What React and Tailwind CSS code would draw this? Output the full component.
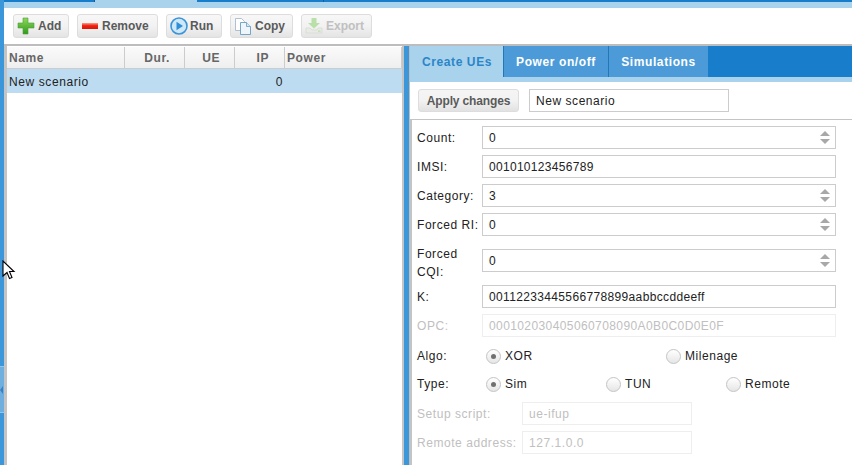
import React from "react";

const font = { fontFamily: '"Liberation Sans", Arial, sans-serif' };

function AddIcon() {
  return (
    <svg width="18" height="18" viewBox="0 0 18 18">
      <defs>
        <linearGradient id="g1" x1="0" y1="0" x2="0" y2="1">
          <stop offset="0" stopColor="#8fd85a" />
          <stop offset="1" stopColor="#2f9a1c" />
        </linearGradient>
      </defs>
      <path d="M6 1h5v5h6v5h-6v6H6v-6H1V6h5z" fill="url(#g1)" stroke="#4a9e35" strokeWidth="0.6" />
    </svg>
  );
}
function RemoveIcon() {
  return (
    <svg width="18" height="18" viewBox="0 0 18 18">
      <defs>
        <linearGradient id="g2" x1="0" y1="0" x2="0" y2="1">
          <stop offset="0" stopColor="#f8a090" />
          <stop offset="0.45" stopColor="#f02010" />
          <stop offset="1" stopColor="#d81808" />
        </linearGradient>
      </defs>
      <rect x="1" y="6" width="16" height="6" fill="url(#g2)" />
    </svg>
  );
}
function RunIcon() {
  return (
    <svg width="18" height="18" viewBox="0 0 18 18">
      <circle cx="9" cy="9" r="8" fill="#cfe8f8" stroke="#3c94d8" strokeWidth="1.6" />
      <path d="M6.5 4.8L13 9l-6.5 4.2z" fill="#2f8ed8" />
    </svg>
  );
}
function CopyIcon() {
  return (
    <svg width="18" height="18" viewBox="0 0 18 18">
      <path d="M1.5 1.5h6l3 3v9h-9z" fill="#fff" stroke="#9db4c8" strokeWidth="0.8" />
      <path d="M6.5 5.5h6l4 4v8h-10z" fill="#eef6fb" stroke="#6a9cc0" strokeWidth="0.9" />
      <path d="M12.5 5.5v4h4" fill="#d5e8f4" stroke="#6a9cc0" strokeWidth="0.8" />
    </svg>
  );
}
function ExportIcon() {
  return (
    <svg width="18" height="18" viewBox="0 0 18 18">
      <path d="M6.5 1h5v5h3.5L9 11.5 3 6h3.5z" fill="#b9e0a8" />
      <path d="M1 11h4l2 2h5l1-2h4v5H1z" fill="#e8ece4" stroke="#d0d6cc" strokeWidth="0.6" />
      <rect x="13" y="13.5" width="2.5" height="1.2" fill="#b9e0a8" />
    </svg>
  );
}

function Btn({ icon, label, w, disabled, gap = "gap-[3px]", pl = "pl-[3px]" }) {
  return (
    <div
      className={`h-[24px] flex items-center ${gap} ${pl} rounded-[3px] border border-[#dddddd] bg-gradient-to-b from-[#f7f7f7] via-[#f2f2f2] to-[#e4e4e4] text-[12px] font-bold tracking-[0px] ${disabled ? "text-[#c0c0c0]" : "text-[#5a5a5a]"} ${w}`}
    >
      {icon}
      <span>{label}</span>
    </div>
  );
}

function HeadCell({ label, w, right, pr = "" }) {
  return (
    <div
      className={`h-full flex items-center border-r border-[#cccccc] text-[12px] font-bold tracking-[0.6px] text-[#666666] ${w} ${right ? "justify-end" : "pl-[2px]"} ${pr}`}
    >
      {label}
    </div>
  );
}

function Spinner() {
  return (
    <div className="flex flex-col items-center gap-[3px] mr-[4px]">
      <span className="w-0 h-0 border-x-[5px] border-x-transparent border-b-[5px] border-b-[#a8a8a8]" />
      <span className="w-0 h-0 border-x-[5px] border-x-transparent border-t-[5px] border-t-[#a8a8a8]" />
    </div>
  );
}

function Field({ value, spin, disabled, w = "w-[354px]", track = "tracking-[0.55px]" }) {
  return (
    <div
      className={`h-[23px] flex items-center justify-between pl-[6px] pr-[1px] border ${disabled ? "border-[#eeeeee] text-[#c0c0c0]" : "border-[#cccccc] text-[#222222]"} bg-white ${track} ${w}`}
    >
      <span>{value}</span>
      {spin && <Spinner />}
    </div>
  );
}

function Row({ label, value, spin, disabled, track }) {
  return (
    <div className="flex items-center h-[23px] mb-[6px]">
      <div className={`w-[65px] tracking-[0.55px] ${disabled ? "text-[#c0c0c0]" : "text-[#222222]"}`}>{label}</div>
      <Field value={value} spin={spin} disabled={disabled} track={track} />
    </div>
  );
}

function Radio({ label, checked, w }) {
  return (
    <div className={`flex items-center gap-[4px] tracking-[0.55px] text-[#222222] ${w}`}>
      <span className="w-[15px] h-[15px] rounded-full border border-[#c4c4c4] bg-gradient-to-b from-white to-[#e6e6e6] flex items-center justify-center">
        {checked && <span className="w-[5px] h-[5px] rounded-full bg-[#707070]" />}
      </span>
      <span>{label}</span>
    </div>
  );
}

export default function App() {
  return (
    <div style={font} className="relative w-[852px] h-[465px] overflow-hidden bg-white flex text-[12px]">
      {/* left collapsed strip */}
      <div className="w-[4px] shrink-0 h-full bg-[#3c96da] flex flex-col">
        <div className="h-[366px]" />
        <div className="h-[47px] bg-[#6fafe0] border-y border-[#93c4ea] flex items-center">
          <span className="w-0 h-0 border-y-[4px] border-y-transparent border-r-[3px] border-r-[#3a80c0]" />
        </div>
      </div>

      <div className="flex-1 min-w-0 flex flex-col">
        {/* top tabs remainder */}
        <div className="h-[2px] flex shrink-0">
          <div className="w-[91px] bg-[#187dca] border-r border-[#0f5f9e]" />
          <div className="w-[102px] bg-[#a9d2ec]" />
          <div className="w-[127px] bg-[#187dca] border-r border-[#0f5f9e]" />
          <div className="flex-1 bg-[#187dca]" />
        </div>
        <div className="h-[6px] shrink-0 bg-[#a9d2ec]" />

        {/* toolbar */}
        <div className="h-[36px] shrink-0 bg-white flex items-start pt-[6px] pl-[9px] gap-[8px]">
          <Btn icon={<AddIcon />} label="Add" w="w-[56px]" />
          <Btn icon={<RemoveIcon />} label="Remove" w="w-[81px]" />
          <Btn icon={<RunIcon />} label="Run" w="w-[56px]" gap="gap-[2px]" />
          <Btn icon={<CopyIcon />} label="Copy" w="w-[63px]" />
          <Btn icon={<ExportIcon />} label="Export" w="w-[71px]" pl="pl-[3px]" disabled />
        </div>

        {/* content */}
        <div className="flex-1 min-h-0 flex border-t-[2px] border-[#bdbdbd]">
          {/* left grid */}
          <div className="w-[398px] shrink-0 flex flex-col border-l-[3px] border-[#c4c4c4]">
            <div className="h-[22px] flex border-b border-[#cccccc] bg-gradient-to-b from-[#fafafa] to-[#efefef] mt-[1px]">
              <HeadCell label="Name" w="w-[118px]" />
              <HeadCell label="Dur." w="w-[60px]" right pr="pr-[14px]" />
              <HeadCell label="UE" w="w-[50px]" right pr="pr-[14px]" />
              <HeadCell label="IP" w="w-[50px]" right pr="pr-[15px]" />
              <HeadCell label="Power" w="flex-1" />
            </div>
            <div className="h-[24px] flex items-center pt-[1px] bg-[#bedcf1] text-[#222222] tracking-[0.6px]">
              <div className="w-[276px] pl-[2px]">New scenario</div>
              <div className="w-[0px] flex justify-end">0</div>
            </div>
          </div>

          {/* splitter */}
          <div className="w-[2px] shrink-0 bg-[#c4c4c4]" />
          <div className="w-[5px] shrink-0 bg-[#3c96da]" />

          {/* right panel */}
          <div className="flex-1 min-w-0 flex flex-col border-l-[1px] border-[#bdbdbd]">
            <div className="h-[31px] shrink-0 flex bg-[#187dca] text-[12px] font-bold tracking-[0.6px]">
              <div className="w-[94px] flex items-center justify-center pl-[1px] bg-[#a9d2ec] text-[#2a86c8] border-r border-[#2277b8]">Create UEs</div>
              <div className="w-[105px] flex items-center justify-center bg-[#4c9bd8] text-white border-r border-[#2277b8]">Power on/off</div>
              <div className="w-[99px] flex items-center justify-center bg-[#4c9bd8] text-white">Simulations</div>
            </div>
            <div className="h-[5px] shrink-0 bg-[#a9d2ec]" />

            <div className="h-[38px] shrink-0 flex items-start pt-[7px] pl-[8px] gap-[10px] border-b-[1px] border-[#c4c4c4]">
              <div className="w-[101px] h-[23px] flex items-center justify-center rounded-[3px] border border-[#dddddd] bg-gradient-to-b from-[#f5f5f5] via-[#f2f2f2] to-[#e2e2e2] font-bold tracking-[-0.15px] text-[#5a5a5a]">
                Apply changes
              </div>
              <Field value="New scenario" w="w-[200px]" />
            </div>

            <div className="flex-1 min-h-0 border-l-[2px] border-[#c4c4c4] pl-[5px] pt-[6px]">
              <Row label="Count:" value="0" spin />
              <Row label="IMSI:" value="001010123456789" track="tracking-[0.3px]" />
              <Row label="Category:" value="3" spin />
              <Row label="Forced RI:" value="0" spin />

              <div className="flex items-start h-[37px] mb-[6px]">
                <div className="w-[65px] pt-[4px] leading-[17.5px] tracking-[0.55px] text-[#222222]">
                  Forced<br />CQI:
                </div>
                <div className="mt-[7px]">
                  <Field value="0" spin />
                </div>
              </div>

              <Row label="K:" value="00112233445566778899aabbccddeeff" track="tracking-[0.35px]" />
              <Row label="OPC:" value="000102030405060708090A0B0C0D0E0F" disabled track="tracking-[0.4px]" />

              <div className="flex items-center h-[28px] -mt-[1px]">
                <div className="w-[69px] tracking-[0.55px] text-[#222222]">Algo:</div>
                <Radio label="XOR" checked w="w-[180px]" />
                <Radio label="Milenage" />
              </div>
              <div className="flex items-center h-[28px] mb-[4px]">
                <div className="w-[69px] tracking-[0.55px] text-[#222222]">Type:</div>
                <Radio label="Sim" checked w="w-[120px]" />
                <Radio label="TUN" w="w-[120px]" />
                <Radio label="Remote" />
              </div>

              <div className="flex items-center h-[23px] mb-[6px]">
                <div className="w-[105px] tracking-[0.55px] text-[#c0c0c0]">Setup script:</div>
                <Field value="ue-ifup" disabled w="w-[170px]" />
              </div>
              <div className="flex items-center h-[23px]">
                <div className="w-[105px] tracking-[0.55px] text-[#c0c0c0]">Remote address:</div>
                <Field value="127.1.0.0" disabled w="w-[170px]" />
              </div>
            </div>
          </div>
        </div>
      </div>

      {/* mouse cursor */}
      <svg className="absolute left-[2px] top-[260px]" width="14" height="20" viewBox="0 0 14 20">
        <path d="M1 1v15l4-3.5 2.5 6 2.5-1-2.5-6H12z" fill="#fff" stroke="#000" strokeWidth="1.1" />
      </svg>
    </div>
  );
}
